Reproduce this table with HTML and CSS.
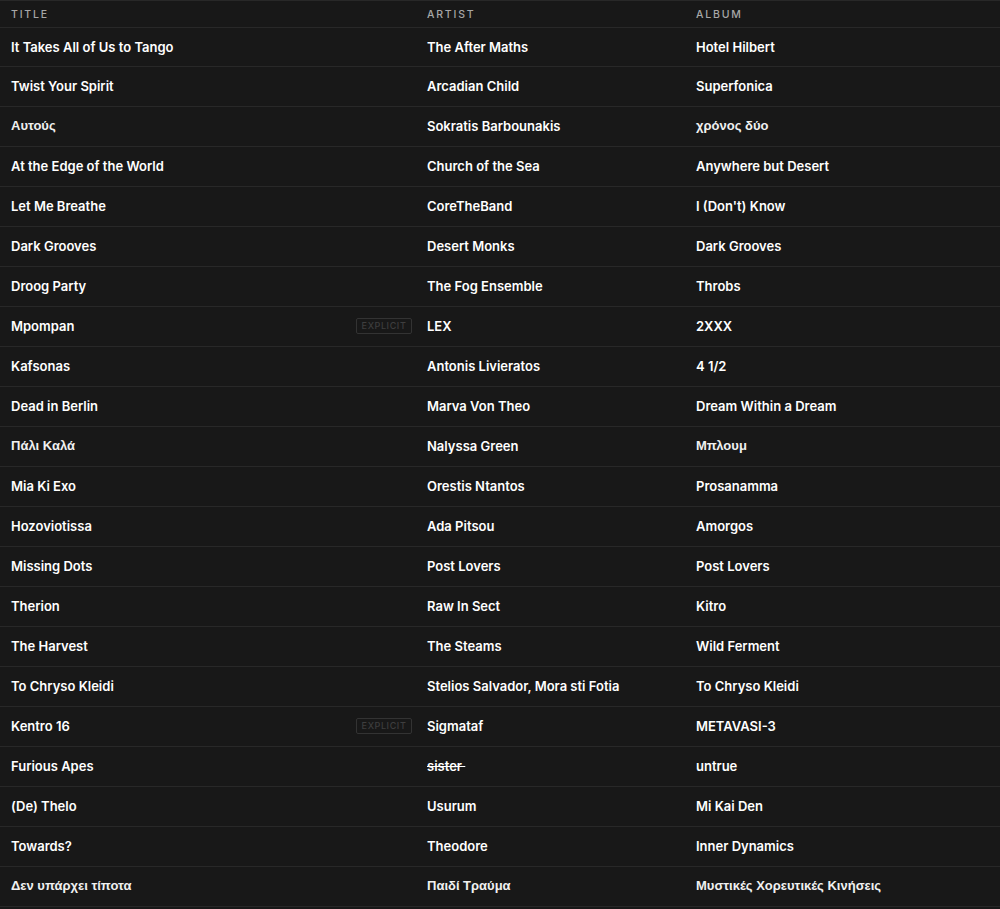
FILE: index.html
```html
<!DOCTYPE html>
<html lang="en">
<head>
<meta charset="utf-8">
<title>Tracks</title>
<link rel="stylesheet" href="styles.css">
</head>
<body>
<div class="tracks">
  <div class="row head">
    <div class="cell">TITLE</div>
    <div class="cell">ARTIST</div>
    <div class="cell">ALBUM</div>
  </div>
  <div class="row first"><div class="cell">It Takes All of Us to Tango</div><div class="cell">The After Maths</div><div class="cell">Hotel Hilbert</div></div>
  <div class="row"><div class="cell">Twist Your Spirit</div><div class="cell">Arcadian Child</div><div class="cell">Superfonica</div></div>
  <div class="row"><div class="cell greek">Αυτούς</div><div class="cell">Sokratis Barbounakis</div><div class="cell greek">χρόνος δύο</div></div>
  <div class="row"><div class="cell">At the Edge of the World</div><div class="cell">Church of the Sea</div><div class="cell">Anywhere but Desert</div></div>
  <div class="row"><div class="cell">Let Me Breathe</div><div class="cell">CoreTheBand</div><div class="cell">I (Don't) Know</div></div>
  <div class="row"><div class="cell">Dark Grooves</div><div class="cell">Desert Monks</div><div class="cell">Dark Grooves</div></div>
  <div class="row"><div class="cell">Droog Party</div><div class="cell">The Fog Ensemble</div><div class="cell">Throbs</div></div>
  <div class="row"><div class="cell title"><span>Mpompan</span><span class="explicit">EXPLICIT</span></div><div class="cell">LEX</div><div class="cell">2XXX</div></div>
  <div class="row"><div class="cell">Kafsonas</div><div class="cell">Antonis Livieratos</div><div class="cell">4 1/2</div></div>
  <div class="row"><div class="cell">Dead in Berlin</div><div class="cell">Marva Von Theo</div><div class="cell">Dream Within a Dream</div></div>
  <div class="row"><div class="cell greek">Πάλι Καλά</div><div class="cell">Nalyssa Green</div><div class="cell greek">Μπλουμ</div></div>
  <div class="row"><div class="cell">Mia Ki Exo</div><div class="cell">Orestis Ntantos</div><div class="cell">Prosanamma</div></div>
  <div class="row"><div class="cell">Hozoviotissa</div><div class="cell">Ada Pitsou</div><div class="cell">Amorgos</div></div>
  <div class="row"><div class="cell">Missing Dots</div><div class="cell">Post Lovers</div><div class="cell">Post Lovers</div></div>
  <div class="row"><div class="cell">Therion</div><div class="cell">Raw In Sect</div><div class="cell">Kitro</div></div>
  <div class="row"><div class="cell">The Harvest</div><div class="cell">The Steams</div><div class="cell">Wild Ferment</div></div>
  <div class="row"><div class="cell">To Chryso Kleidi</div><div class="cell">Stelios Salvador, Mora sti Fotia</div><div class="cell">To Chryso Kleidi</div></div>
  <div class="row"><div class="cell title"><span>Kentro 16</span><span class="explicit">EXPLICIT</span></div><div class="cell">Sigmataf</div><div class="cell">METAVASI-3</div></div>
  <div class="row"><div class="cell">Furious Apes</div><div class="cell"><span class="struck">sister </span></div><div class="cell">untrue</div></div>
  <div class="row"><div class="cell">(De) Thelo</div><div class="cell">Usurum</div><div class="cell">Mi Kai Den</div></div>
  <div class="row"><div class="cell">Towards?</div><div class="cell">Theodore</div><div class="cell">Inner Dynamics</div></div>
  <div class="row"><div class="cell greek">Δεν υπάρχει τίποτα</div><div class="cell greek">Παιδί Τραύμα</div><div class="cell greek">Μυστικές Χορευτικές Κινήσεις</div></div>
  <div class="row"><div class="cell"></div><div class="cell"></div><div class="cell"></div></div>
</div>
</body>
</html>
```

FILE: styles.css
```css
html, body {
  margin: 0;
  padding: 0;
  background: #181818;
  overflow: hidden;
}

.tracks {
  font-family: Inter, "Noto Sans", "Liberation Sans", sans-serif;
  color: #ffffff;
  border-top: 1px solid #282828;
}

.row {
  display: grid;
  grid-template-columns: 416px 269px 1fr;
  box-sizing: border-box;
  height: 40px;
  padding-bottom: 2px;
  align-items: center;
  border-bottom: 1px solid #282828;
  font-size: 13px;
  font-weight: 600;
}

.row.head {
  height: 27px;
  padding-bottom: 0;
  font-size: 10.5px;
  font-weight: 500;
  letter-spacing: 1.8px;
  color: #a7a7a7;
}

.row.first {
  height: 39px;
  padding-bottom: 0;
}

.cell {
  padding-left: 11px;
  white-space: nowrap;
  overflow: hidden;
}

.cell.greek {
  font-family: "Liberation Sans", Arial, sans-serif;
  font-weight: 700;
  font-size: 13px;
  color: #f0f0f0;
}

.cell.title {
  display: flex;
  align-items: center;
  justify-content: space-between;
  padding-right: 4px;
}

.explicit {
  display: inline-block;
  box-sizing: border-box;
  width: 56px;
  height: 16px;
  line-height: 14px;
  border: 1px solid #333333;
  border-radius: 2px;
  color: #3e3e3e;
  font-size: 9px;
  font-weight: 500;
  letter-spacing: 0.6px;
  text-align: center;
}

.struck {
  text-decoration: line-through;
  white-space: pre;
}
```
